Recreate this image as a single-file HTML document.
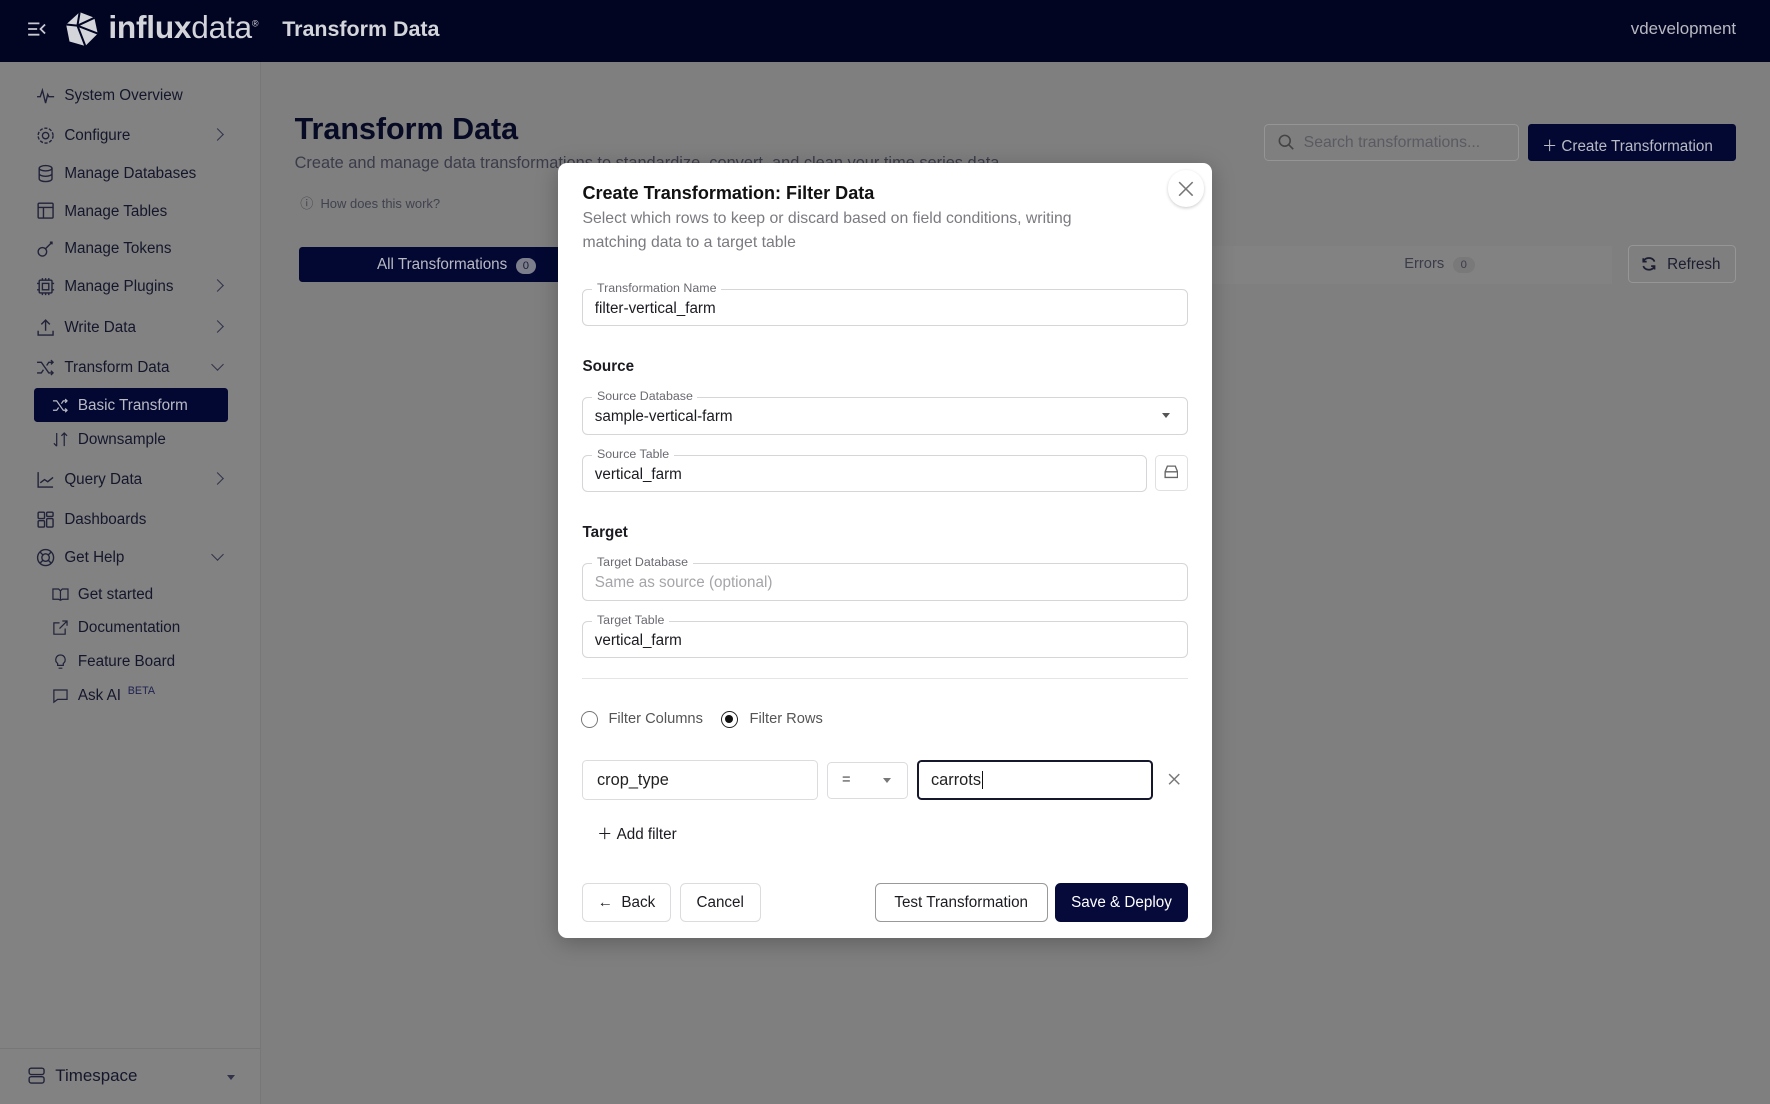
<!DOCTYPE html>
<html><head><meta charset="utf-8">
<style>
*{box-sizing:border-box;margin:0;padding:0}
html,body{width:1770px;height:1104px;overflow:hidden;background:#7f7f7f}
#root{zoom:1.12883;width:1568px;height:978px;position:relative;font-family:"Liberation Sans",sans-serif;color:#111426;background:#7f7f7f}
.abs{position:absolute}
.hdr{left:0;top:0;width:1568px;height:55px;background:#020522}
.side{left:0;top:55px;width:231px;height:923px;background:#828282;border-right:1px solid #777}
.si{position:absolute;left:32px;font-size:13.5px;color:#14172b;display:flex;align-items:center;gap:8px;height:20px}
.si svg{width:17px;height:17px;fill:none;stroke:#20233a;stroke-width:1.3}
.chev{position:absolute;left:189px;width:8px;height:8px;border-right:1.5px solid #30334a;border-bottom:1.5px solid #30334a}
.modal{left:494px;top:144px;width:580px;height:687px;background:#fff;border-radius:8px;box-shadow:0 4px 20px rgba(0,0,0,.25)}
.fld{position:absolute;border:1px solid #d6d6d8;border-radius:5px;height:33px;font-size:13.5px;color:#1b1b22;padding:9px 0 0 10px}
.fld .lb{position:absolute;left:8px;top:-7px;background:#fff;padding:0 4px;font-size:11px;color:#6a6a72;line-height:12px}
.sec{position:absolute;left:22px;font-size:13.5px;font-weight:bold;color:#1b1b22}
.btn{position:absolute;border:1px solid #dcdcde;border-radius:5px;height:35px;font-size:13.5px;display:flex;align-items:center;justify-content:center;color:#1b1b22}
</style></head><body><div id="root">
<div class="abs hdr">
 <svg class="abs" style="left:24px;top:18px" width="18" height="16" viewBox="0 0 18 16" fill="none" stroke="#c8c9d2" stroke-width="1.6"><path d="M1 3h10M1 8h8M1 13h10M16 4l-4 4 4 4"/></svg>
 <svg class="abs" style="left:58px;top:10px" width="30" height="32" viewBox="0 0 30 32"><path d="M13 1 L26 6 L29 20 L18 31 L4 27 L1 12Z" fill="#d4d5db"/><path d="M13 1 L11 13 L1 12 M11 13 L18 31 M11 13 L26 6 M11 13 L29 20" stroke="#020522" stroke-width="1.8" fill="none"/></svg>
 <div class="abs" style="left:96px;top:8px;font-size:28px;color:#d4d5db;letter-spacing:-.2px"><b>influx</b>data<sup style="font-size:8px">®</sup></div>
 <div class="abs" style="left:250px;top:15px;font-size:19px;font-weight:bold;color:#d4d5db">Transform Data</div>
 <div class="abs" style="right:30px;top:17px;font-size:15px;color:#b8b9c2">vdevelopment</div>
</div>
<div class="abs side">
 <div class="si" style="top:20px"><svg viewBox="0 0 18 18"><path d="M1 10h3l2-6 3 12 2-8 1 2h5"/></svg>System Overview</div>
 <div class="si" style="top:55px"><svg viewBox="0 0 18 18"><circle cx="9" cy="9" r="3"/><circle cx="9" cy="9" r="7" stroke-dasharray="3 1.5"/></svg>Configure</div><div class="chev" style="top:60px;transform:rotate(-45deg)"></div>
 <div class="si" style="top:89px"><svg viewBox="0 0 18 18"><ellipse cx="9" cy="4" rx="6" ry="2.5"/><path d="M3 4v10c0 1.4 2.7 2.5 6 2.5s6-1.1 6-2.5V4M3 9c0 1.4 2.7 2.5 6 2.5s6-1.1 6-2.5"/></svg>Manage Databases</div>
 <div class="si" style="top:122px"><svg viewBox="0 0 18 18"><rect x="2" y="2" width="14" height="14" rx="1"/><path d="M2 6h14M7 6v10"/></svg>Manage Tables</div>
 <div class="si" style="top:155px"><svg viewBox="0 0 18 18"><circle cx="6" cy="12" r="4"/><path d="M9 9l6-6M13 3h2v2"/></svg>Manage Tokens</div>
 <div class="si" style="top:189px"><svg viewBox="0 0 18 18"><rect x="3" y="3" width="12" height="12" rx="1"/><rect x="6" y="6" width="6" height="6"/><path d="M6 1v2M9 1v2M12 1v2M6 15v2M9 15v2M12 15v2M1 6h2M1 12h2M15 6h2M15 12h2"/></svg>Manage Plugins</div><div class="chev" style="top:194px;transform:rotate(-45deg)"></div>
 <div class="si" style="top:225px"><svg viewBox="0 0 18 18"><path d="M9 12V2M5 6l4-4 4 4M2 12v4h14v-4"/></svg>Write Data</div><div class="chev" style="top:230px;transform:rotate(-45deg)"></div>
 <div class="si" style="top:261px"><svg viewBox="0 0 18 18"><path d="M1 4h4l7 10h4M1 14h4l2-3M10 7l2-3h4M14 2l2 2-2 2M14 12l2 2-2 2"/></svg>Transform Data</div><div class="chev" style="top:264px;transform:rotate(45deg)"></div>
 <div class="abs" style="left:30px;top:289px;width:172px;height:30px;background:#030832;border-radius:3px"></div>
 <div class="si" style="left:46px;top:294px;color:#b9bac4"><svg viewBox="0 0 18 18" style="stroke:#b9bac4;width:15px"><path d="M1 4h4l7 10h4M1 14h4l2-3M10 7l2-3h4M14 2l2 2-2 2M14 12l2 2-2 2"/></svg>Basic Transform</div>
 <div class="si" style="left:46px;top:324px"><svg viewBox="0 0 18 18" style="width:15px"><path d="M5 2v14M2 13l3 3M13 16V2M10 5l3-3 3 3"/></svg>Downsample</div>
 <div class="si" style="top:360px"><svg viewBox="0 0 18 18"><path d="M2 2v14h14M4 12l4-3 3 2 5-4"/></svg>Query Data</div><div class="chev" style="top:365px;transform:rotate(-45deg)"></div>
 <div class="si" style="top:395px"><svg viewBox="0 0 18 18"><rect x="2" y="2" width="6" height="6" rx="1"/><rect x="10" y="2" width="6" height="4" rx="1"/><rect x="2" y="10" width="6" height="6" rx="1"/><rect x="10" y="8" width="6" height="8" rx="1"/></svg>Dashboards</div>
 <div class="si" style="top:429px"><svg viewBox="0 0 18 18"><circle cx="9" cy="9" r="7.5"/><circle cx="9" cy="9" r="3.5"/><path d="M4 4l2.5 2.5M14 4l-2.5 2.5M4 14l2.5-2.5M14 14l-2.5-2.5"/></svg>Get Help</div><div class="chev" style="top:432px;transform:rotate(45deg)"></div>
 <div class="si" style="left:46px;top:462px"><svg viewBox="0 0 18 18" style="width:15px"><path d="M1 3h6l2 2 2-2h6v11h-6l-2 1-2-1H1zM9 5v10"/></svg>Get started</div>
 <div class="si" style="left:46px;top:491px"><svg viewBox="0 0 18 18" style="width:15px"><path d="M14 10v6H2V4h6M11 2h5v5M16 2l-8 8"/></svg>Documentation</div>
 <div class="si" style="left:46px;top:521px"><svg viewBox="0 0 18 18" style="width:15px"><path d="M9 2a5 5 0 0 0-3 9v2h6v-2a5 5 0 0 0-3-9zM7 16h4"/></svg>Feature Board</div>
 <div class="si" style="left:46px;top:551px"><svg viewBox="0 0 18 18" style="width:15px"><path d="M2 3h14v10H6l-4 3z"/></svg>Ask AI <span style="font-size:9.5px;color:#1d2150;margin-top:-8px;margin-left:-2px">BETA</span></div>
 <div class="abs" style="left:0;top:873px;width:231px;border-top:1px solid #777"></div>
 <div class="si" style="left:24px;top:888px;font-size:15px"><svg viewBox="0 0 18 18"><rect x="2" y="2" width="14" height="6" rx="2"/><rect x="2" y="10" width="14" height="6" rx="2"/></svg>Timespace</div>
 <div class="abs" style="left:201px;top:897px;border:4px solid transparent;border-top:5px solid #30334a"></div>
</div>
<div class="abs" style="left:261px;top:99px;font-size:27px;font-weight:bold;color:#070a24">Transform Data</div>
<div class="abs" style="left:261px;top:136px;font-size:14.5px;color:#3a3c4a">Create and manage data transformations to standardize, convert, and clean your time series data</div>
<div class="abs" style="left:266px;top:171px;font-size:11.5px;color:#40424f">ⓘ&nbsp; How does this work?</div>
<div class="abs" style="left:1120px;top:110px;width:226px;height:33px;border:1px solid #959595;border-radius:4px;font-size:14px;color:#5a5b62;padding:8px 0 0 34px">Search transformations...</div>
<svg class="abs" style="left:1132px;top:119px" width="15" height="15" viewBox="0 0 15 15" fill="none" stroke="#444" stroke-width="1.4"><circle cx="6" cy="6" r="4.8"/><path d="M9.5 9.5l4 4"/></svg>
<div class="abs" style="left:1354px;top:110px;width:184px;height:33px;background:#030832;border-radius:3px;font-size:13.5px;color:#b9bac4;padding:9px 0 0 12px">＋&nbsp;Create Transformation</div>
<div class="abs" style="left:495px;top:218px;width:933px;height:34px;background:#828282"></div>
<div class="abs" style="left:265px;top:219px;width:232px;height:31px;background:#030832;border-radius:3px;font-size:13.5px;color:#b9bac4;padding:8px 0 0 69px">All Transformations <span style="display:inline-block;background:#7d7e8c;color:#1a1c30;border-radius:9px;font-size:10px;padding:2px 6px;margin-left:4px">0</span></div>
<div class="abs" style="left:1244px;top:227px;font-size:13px;color:#3a3c4a">Errors <span style="display:inline-block;background:#797979;border-radius:9px;font-size:10px;padding:2px 7px;margin-left:4px">0</span></div>
<div class="abs" style="left:1442px;top:217px;width:96px;height:34px;border:1px solid #969696;border-radius:4px;font-size:13.5px;color:#1b1d30;padding:9px 0 0 34px">Refresh</div>
<svg class="abs" style="left:1454px;top:227px" width="14" height="14" viewBox="0 0 14 14" fill="none" stroke="#1b1d30" stroke-width="1.5"><path d="M12 5A5.5 5.5 0 0 0 2 5M2 2v3h3M2 9a5.5 5.5 0 0 0 10 0M12 12V9H9"/></svg>

<div class="abs modal">
 <div class="abs" style="left:22px;top:18px;font-size:16px;font-weight:bold;color:#111">Create Transformation: Filter Data</div>
 <div class="abs" style="left:22px;top:39px;width:478px;font-size:14px;line-height:22px;color:#7a7a80">Select which rows to keep or discard based on field conditions, writing matching data to a target table</div>
 <div class="abs" style="left:541px;top:7px;width:32px;height:32px;border-radius:50%;box-shadow:0 1px 3px rgba(0,0,0,.2);background:#fff"></div>
 <svg class="abs" style="left:550px;top:16px" width="14" height="14" viewBox="0 0 14 14" stroke="#777" stroke-width="1.4"><path d="M1 1l12 12M13 1L1 13"/></svg>
 <div class="fld" style="left:22px;top:112px;width:536px"><span class="lb">Transformation Name</span>filter-vertical_farm</div>
 <div class="sec" style="top:173px">Source</div>
 <div class="fld" style="left:22px;top:208px;width:536px"><span class="lb">Source Database</span>sample-vertical-farm</div>
 <div class="abs" style="left:535px;top:222px;border:4px solid transparent;border-top:5px solid #555"></div>
 <div class="fld" style="left:22px;top:259px;width:500px"><span class="lb">Source Table</span>vertical_farm</div>
 <div class="abs" style="left:529px;top:259px;width:29px;height:32px;border:1px solid #e0e0e2;border-radius:4px"></div>
 <svg class="abs" style="left:537px;top:268px" width="13" height="12" viewBox="0 0 13 12" fill="none" stroke="#666" stroke-width="1.2"><path d="M1 6l2-5h7l2 5v5H1zM1 6h11"/></svg>
 <div class="sec" style="top:320px">Target</div>
 <div class="fld" style="left:22px;top:355px;width:536px;color:#a5a5aa"><span class="lb">Target Database</span>Same as source (optional)</div>
 <div class="fld" style="left:22px;top:406px;width:536px"><span class="lb">Target Table</span>vertical_farm</div>
 <div class="abs" style="left:22px;top:457px;width:536px;border-top:1px solid #e5e5e7"></div>
 <div class="abs" style="left:21px;top:486px;width:15px;height:15px;border:1.5px solid #777;border-radius:50%"></div>
 <div class="abs" style="left:45px;top:486px;font-size:13px;color:#555">Filter Columns</div>
 <div class="abs" style="left:145px;top:486px;width:15px;height:15px;border:1.5px solid #222;border-radius:50%"><div style="margin:2.5px;width:7px;height:7px;background:#111;border-radius:50%"></div></div>
 <div class="abs" style="left:170px;top:486px;font-size:13px;color:#555">Filter Rows</div>
 <div class="abs" style="left:22px;top:529px;width:209px;height:36px;border:1px solid #dcdcde;border-radius:4px;font-size:14.5px;padding:9px 0 0 12px;color:#222">crop_type</div>
 <div class="abs" style="left:239px;top:531px;width:71px;height:33px;border:1px solid #dcdcde;border-radius:4px;font-size:13px;padding:8px 0 0 12px;color:#444">=</div>
 <div class="abs" style="left:288px;top:545px;border:4px solid transparent;border-top:5px solid #777"></div>
 <div class="abs" style="left:318px;top:529px;width:209px;height:36px;border:2px solid #15172c;border-radius:4px;font-size:14.5px;padding:8px 0 0 11px;color:#222">carrots<span style="border-left:1px solid #111;margin-left:1px"></span></div>
 <svg class="abs" style="left:541px;top:541px" width="11" height="11" viewBox="0 0 11 11" stroke="#777" stroke-width="1.3"><path d="M1 1l9 9M10 1L1 10"/></svg>
 <div class="abs" style="left:35px;top:584px;font-size:13.5px;color:#1b1b22">＋&nbsp;Add filter</div>
 <div class="btn" style="left:22px;top:638px;width:78px">←&nbsp; Back</div>
 <div class="btn" style="left:108px;top:638px;width:72px">Cancel</div>
 <div class="btn" style="left:281px;top:638px;width:153px;border-color:#999">Test Transformation</div>
 <div class="btn" style="left:441px;top:638px;width:117px;background:#050a3a;border-color:#050a3a;color:#fff">Save &amp; Deploy</div>
</div>
</div></body></html>
